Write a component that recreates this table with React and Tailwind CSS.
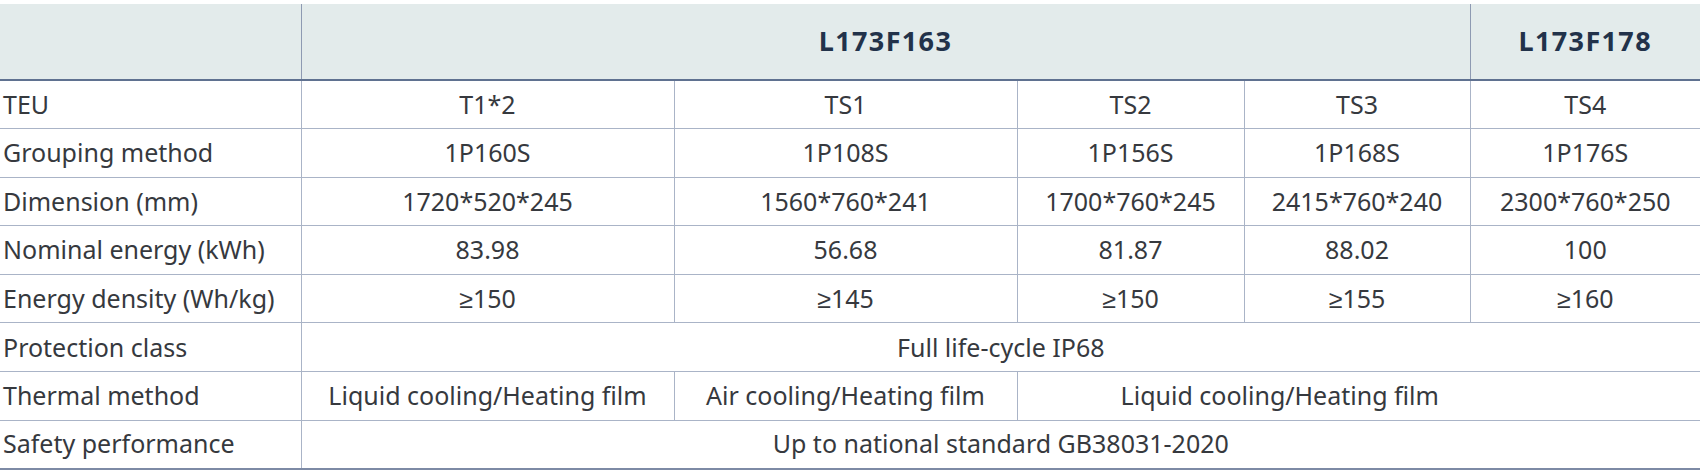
export default function App() {
  const rows = [
    { label: "TEU", cells: [["T1*2"], ["TS1"], ["TS2"], ["TS3"], ["TS4"]] },
    { label: "Grouping method", cells: [["1P160S"], ["1P108S"], ["1P156S"], ["1P168S"], ["1P176S"]] },
    { label: "Dimension (mm)", cells: [["1720*520*245"], ["1560*760*241"], ["1700*760*245"], ["2415*760*240"], ["2300*760*250"]] },
    { label: "Nominal energy (kWh)", cells: [["83.98"], ["56.68"], ["81.87"], ["88.02"], ["100"]] },
    { label: "Energy density (Wh/kg)", cells: [["≥150"], ["≥145"], ["≥150"], ["≥155"], ["≥160"]] },
    { label: "Protection class", cells: [["Full life-cycle IP68", 5]] },
    {
      label: "Thermal method",
      cells: [["Liquid cooling/Heating film"], ["Air cooling/Heating film"], ["Liquid cooling/Heating film", 3, "pr-[158px]"]],
    },
    { label: "Safety performance", cells: [["Up to national standard GB38031-2020", 5]] },
  ];

  return (
    <div className="w-[1700px] h-[472px] bg-white pt-[4px] font-['Noto_Sans',sans-serif] text-[#36393e]">
      <table className="w-full table-fixed border-collapse">
        <colgroup>
          <col className="w-[301px]" />
          <col className="w-[373px]" />
          <col className="w-[343px]" />
          <col className="w-[227px]" />
          <col className="w-[226px]" />
          <col className="w-[230px]" />
        </colgroup>
        <thead>
          <tr className="h-[76px] bg-[#e3ebeb] border-b-2 border-[#5f7190]">
            <th className="border-r border-[#8e9ab2]" />
            <th colSpan={4} className="border-r border-[#8e9ab2] text-[27px] font-bold text-[#22324a] tracking-wider">
              L173F163
            </th>
            <th className="text-[27px] font-bold text-[#22324a] tracking-wider">L173F178</th>
          </tr>
        </thead>
        <tbody>
          {rows.map((r, i) => (
            <tr
              key={r.label}
              className={
                i === rows.length - 1
                  ? "h-[48.6px] border-b-2 border-[#7d8aa5]"
                  : "h-[48.6px] border-b border-[#aab4c7]"
              }
            >
              <td className="pl-[3px] text-left text-[25px] whitespace-nowrap border-r border-[#aab4c7]">{r.label}</td>
              {r.cells.map(([text, span, extra], j) => (
                <td
                  key={j}
                  colSpan={span || 1}
                  className={
                    "text-center text-[25px] whitespace-nowrap border-r border-[#aab4c7] last:border-r-0 " + (extra || "")
                  }
                >
                  {text}
                </td>
              ))}
            </tr>
          ))}
        </tbody>
      </table>
    </div>
  );
}
